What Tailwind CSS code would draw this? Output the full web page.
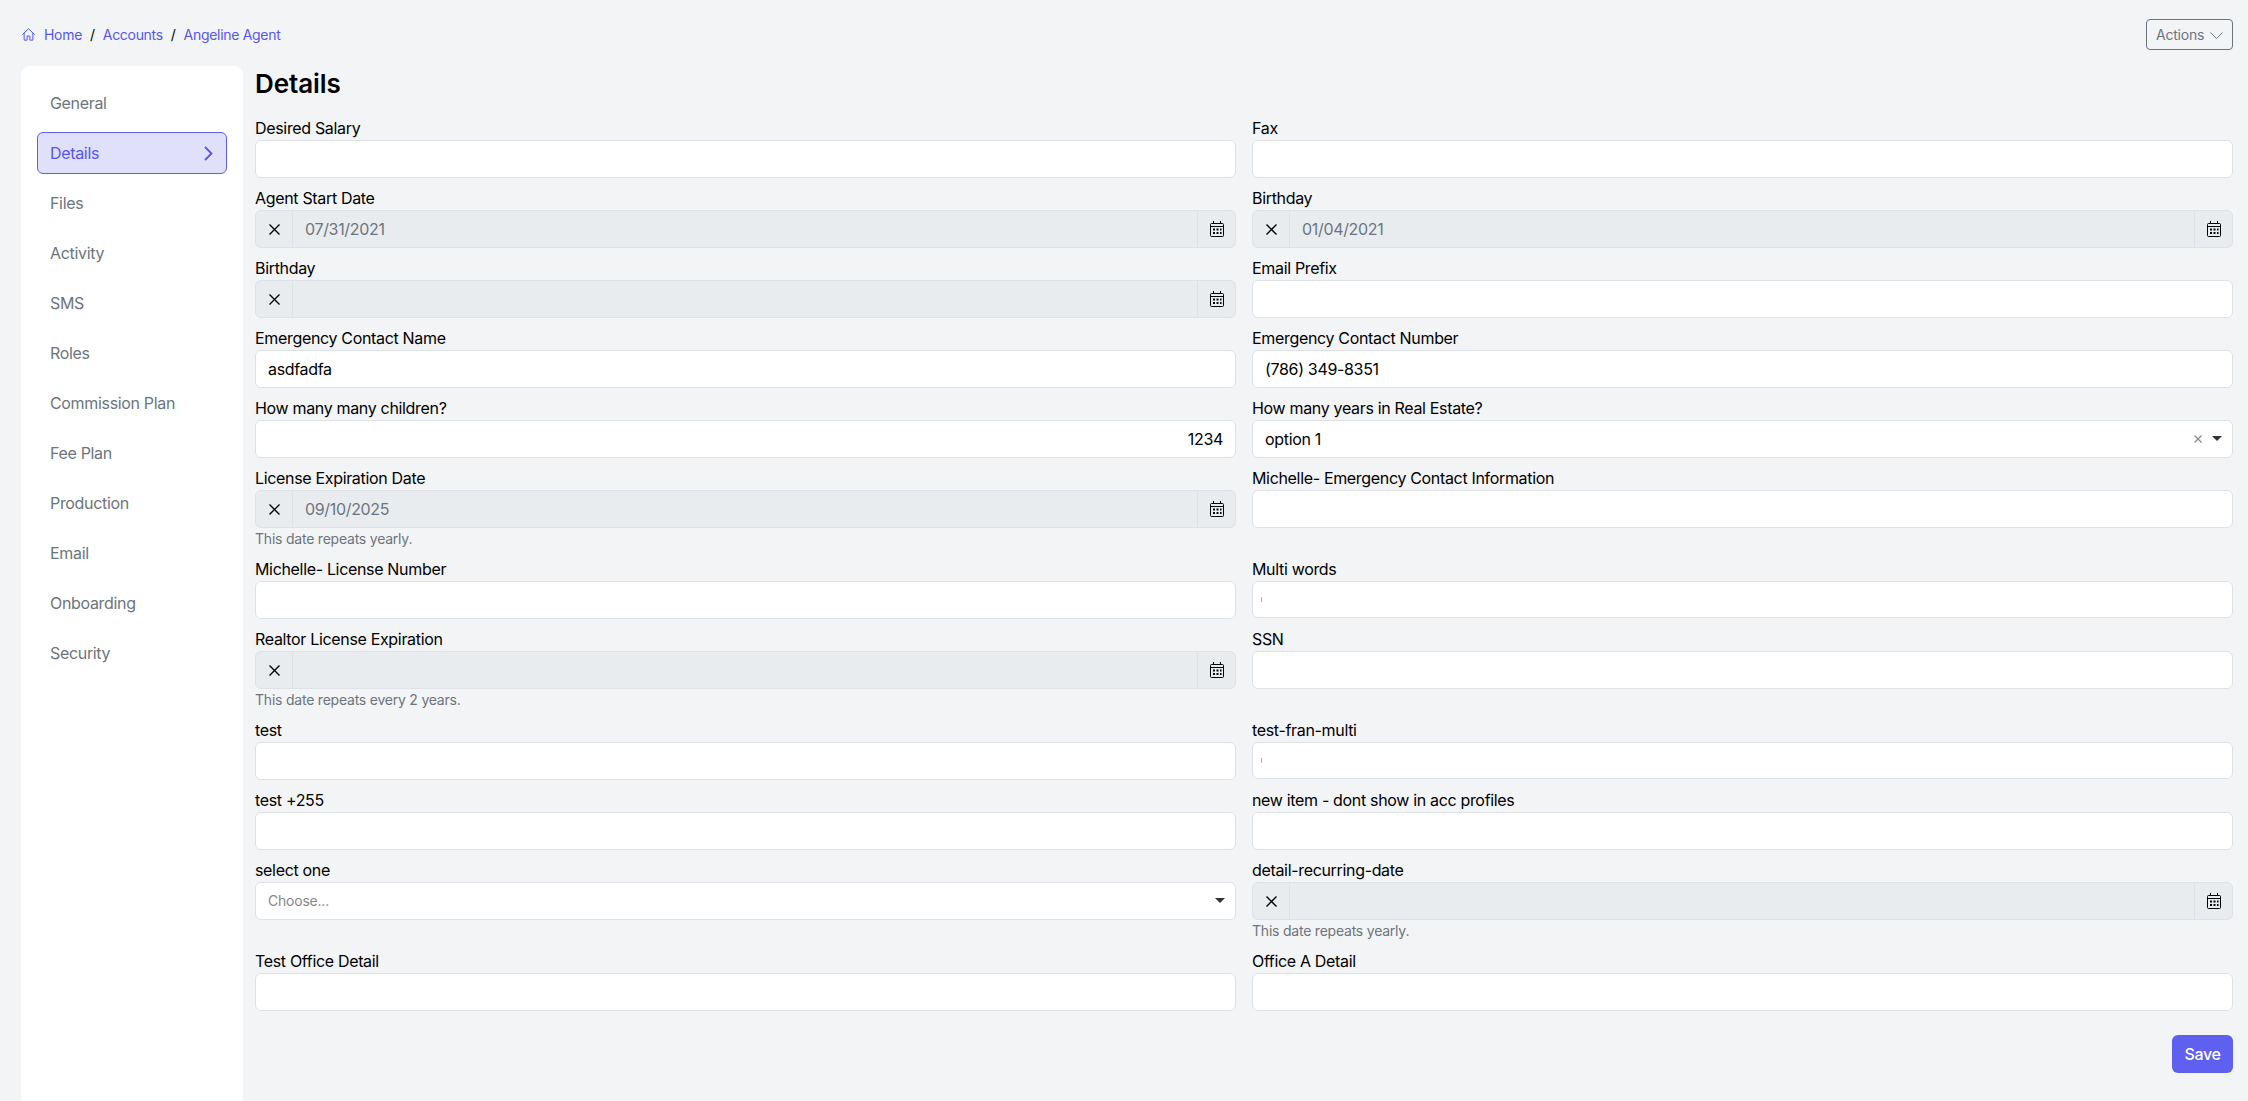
<!DOCTYPE html>
<html lang="en">
<head>
  <meta charset="UTF-8" />
  <title>Angeline Agent - Details</title>
  <script src="https://cdn.jsdelivr.net/npm/@tailwindcss/browser@4"></script>
</head>
<body class="bg-[#f3f4f6] text-black font-['Inter',sans-serif] text-base tracking-[-0.33px] h-screen overflow-hidden">
  <div class="flex flex-col h-[1101px] pl-[21px] pr-[15px]">

    <!-- top bar -->
    <div class="flex items-start justify-between h-[66px] pt-[19px] shrink-0">
      <nav class="flex items-center h-[31px] text-sm tracking-[-0.3px] text-[#5757ee]">
        <svg class="w-[15px] h-[15px] mr-2" viewBox="0 0 24 24" fill="none" stroke="currentColor" stroke-width="1.6" stroke-linecap="round" stroke-linejoin="round"><path d="M2.5 12 12 2.8 21.5 12M5 9.8V21h4.8v-6.5h4.4V21H19V9.8"/></svg>
        <a>Home</a><span class="text-black mx-[8px]">/</span>
        <a>Accounts</a><span class="text-black mx-[8px]">/</span>
        <a>Angeline Agent</a>
      </nav>
      <button class="flex items-center justify-between w-[87px] h-[31px] px-[9px] border border-[#6c757d] rounded text-sm tracking-[-0.22px] text-[#6c757d]">
        Actions
        <svg class="w-[13px] h-[7px] mt-px" viewBox="0 0 13 7" fill="none" stroke="currentColor" stroke-width="1"><path d="M.5.5l6 6 6-6"/></svg>
      </button>
    </div>

    <div class="flex flex-1 min-h-0">
      <!-- sidebar -->
      <aside class="w-[222px] shrink-0 bg-white rounded-t-lg px-4 pt-4 mr-3 text-[#6c757d] flex flex-col gap-2">
        <a class="h-[42px] flex items-center px-[13px]">General</a>
        <a class="h-[42px] flex items-center justify-between pl-3 pr-[13px] border border-[#5f5ff0] rounded-md bg-[#e0e0fb] text-[#5757ee]">
          Details
          <svg class="w-[9px] h-[15px]" viewBox="0 0 9 15" fill="none" stroke="currentColor" stroke-width="1.8"><path d="M1 1l6.5 6.5L1 14"/></svg>
        </a>
        <a class="h-[42px] flex items-center px-[13px]">Files</a>
        <a class="h-[42px] flex items-center px-[13px]">Activity</a>
        <a class="h-[42px] flex items-center px-[13px]">SMS</a>
        <a class="h-[42px] flex items-center px-[13px]">Roles</a>
        <a class="h-[42px] flex items-center px-[13px]">Commission Plan</a>
        <a class="h-[42px] flex items-center px-[13px]">Fee Plan</a>
        <a class="h-[42px] flex items-center px-[13px]">Production</a>
        <a class="h-[42px] flex items-center px-[13px]">Email</a>
        <a class="h-[42px] flex items-center px-[13px]">Onboarding</a>
        <a class="h-[42px] flex items-center px-[13px]">Security</a>
      </aside>

      <!-- form -->
      <main class="flex-1 min-w-0">
        <h1 class="text-[26px] leading-[35px] font-semibold tracking-[-0.1px] mb-[15px]">Details</h1>
        <div class="grid grid-cols-2 gap-x-4">

          <div class="mb-2"><label class="block leading-6">Desired Salary</label><div class="h-[38px] bg-white border border-[#dee2e6] rounded-md"></div></div>
          <div class="mb-2"><label class="block leading-6">Fax</label><div class="h-[38px] bg-white border border-[#dee2e6] rounded-md"></div></div>

          <div class="mb-2"><label class="block leading-6">Agent Start Date</label>
            <div class="h-[38px] flex bg-[#e9ecef] border border-[#dee2e6] rounded-md">
              <span class="w-[37px] flex items-center justify-center border-r border-[#dee2e6]"><svg class="w-[11px] h-[11px]" viewBox="0 0 11 11" stroke="#000" stroke-width="1.4"><path d="M.5.5l10 10M10.5.5l-10 10"/></svg></span>
              <span class="flex-1 flex items-center pl-3 text-[#6c757d]">07/31/2021</span>
              <span class="w-[38px] flex items-center justify-center border-l border-[#dee2e6]"><svg class="w-[14px] h-4" viewBox="0 0 14 16" fill="none" stroke="#000"><rect x=".5" y="2.5" width="13" height="13" rx="1"/><path d="M.5 5.5h13M3.5 0v2.5M10.5 0v2.5"/><path stroke-width="2" stroke-dasharray="2 1.5" d="M3 8.5h8.5M3 12h8.5"/></svg></span>
            </div>
          </div>
          <div class="mb-2"><label class="block leading-6">Birthday</label>
            <div class="h-[38px] flex bg-[#e9ecef] border border-[#dee2e6] rounded-md">
              <span class="w-[37px] flex items-center justify-center border-r border-[#dee2e6]"><svg class="w-[11px] h-[11px]" viewBox="0 0 11 11" stroke="#000" stroke-width="1.4"><path d="M.5.5l10 10M10.5.5l-10 10"/></svg></span>
              <span class="flex-1 flex items-center pl-3 text-[#6c757d]">01/04/2021</span>
              <span class="w-[38px] flex items-center justify-center border-l border-[#dee2e6]"><svg class="w-[14px] h-4" viewBox="0 0 14 16" fill="none" stroke="#000"><rect x=".5" y="2.5" width="13" height="13" rx="1"/><path d="M.5 5.5h13M3.5 0v2.5M10.5 0v2.5"/><path stroke-width="2" stroke-dasharray="2 1.5" d="M3 8.5h8.5M3 12h8.5"/></svg></span>
            </div>
          </div>

          <div class="mb-2"><label class="block leading-6">Birthday</label>
            <div class="h-[38px] flex bg-[#e9ecef] border border-[#dee2e6] rounded-md">
              <span class="w-[37px] flex items-center justify-center border-r border-[#dee2e6]"><svg class="w-[11px] h-[11px]" viewBox="0 0 11 11" stroke="#000" stroke-width="1.4"><path d="M.5.5l10 10M10.5.5l-10 10"/></svg></span>
              <span class="flex-1"></span>
              <span class="w-[38px] flex items-center justify-center border-l border-[#dee2e6]"><svg class="w-[14px] h-4" viewBox="0 0 14 16" fill="none" stroke="#000"><rect x=".5" y="2.5" width="13" height="13" rx="1"/><path d="M.5 5.5h13M3.5 0v2.5M10.5 0v2.5"/><path stroke-width="2" stroke-dasharray="2 1.5" d="M3 8.5h8.5M3 12h8.5"/></svg></span>
            </div>
          </div>
          <div class="mb-2"><label class="block leading-6">Email Prefix</label><div class="h-[38px] bg-white border border-[#dee2e6] rounded-md"></div></div>

          <div class="mb-2"><label class="block leading-6">Emergency Contact Name</label><div class="h-[38px] flex items-center px-3 bg-white border border-[#dee2e6] rounded-md">asdfadfa</div></div>
          <div class="mb-2"><label class="block leading-6">Emergency Contact Number</label><div class="h-[38px] flex items-center px-3 bg-white border border-[#dee2e6] rounded-md">(786) 349-8351</div></div>

          <div class="mb-2"><label class="block leading-6">How many many children?</label><div class="h-[38px] flex items-center justify-end px-3 bg-white border border-[#dee2e6] rounded-md">1234</div></div>
          <div class="mb-2"><label class="block leading-6">How many years in Real Estate?</label>
            <div class="h-[38px] flex items-center pl-3 pr-[10px] bg-white border border-[#dee2e6] rounded-md">
              <span class="flex-1 -mt-px">option 1</span>
              <svg class="w-2 h-2 mr-[10px]" viewBox="0 0 8 8" stroke="#888" stroke-width="1.2"><path d="M.5.5l7 7M7.5.5l-7 7"/></svg>
              <span class="w-0 h-0 -mt-0.5 border-x-[5px] border-x-transparent border-t-[5px] border-t-[#333]"></span>
            </div>
          </div>

          <div class="mb-2"><label class="block leading-6">License Expiration Date</label>
            <div class="h-[38px] flex bg-[#e9ecef] border border-[#dee2e6] rounded-md">
              <span class="w-[37px] flex items-center justify-center border-r border-[#dee2e6]"><svg class="w-[11px] h-[11px]" viewBox="0 0 11 11" stroke="#000" stroke-width="1.4"><path d="M.5.5l10 10M10.5.5l-10 10"/></svg></span>
              <span class="flex-1 flex items-center pl-3 text-[#6c757d]">09/10/2025</span>
              <span class="w-[38px] flex items-center justify-center border-l border-[#dee2e6]"><svg class="w-[14px] h-4" viewBox="0 0 14 16" fill="none" stroke="#000"><rect x=".5" y="2.5" width="13" height="13" rx="1"/><path d="M.5 5.5h13M3.5 0v2.5M10.5 0v2.5"/><path stroke-width="2" stroke-dasharray="2 1.5" d="M3 8.5h8.5M3 12h8.5"/></svg></span>
            </div>
            <p class="text-sm leading-[21px] tracking-[-0.22px] text-[#6c757d]">This date repeats yearly.</p>
          </div>
          <div class="mb-2"><label class="block leading-6">Michelle- Emergency Contact Information</label><div class="h-[38px] bg-white border border-[#dee2e6] rounded-md"></div></div>

          <div class="mb-2"><label class="block leading-6">Michelle- License Number</label><div class="h-[38px] bg-white border border-[#dee2e6] rounded-md"></div></div>
          <div class="mb-2"><label class="block leading-6">Multi words</label><div class="h-[37px] flex items-center pl-2 bg-white border border-[#dee2e6] rounded-md"><span class="w-px h-[5px] bg-[#adb5bd]"></span></div></div>

          <div class="mb-2"><label class="block leading-6">Realtor License Expiration</label>
            <div class="h-[38px] flex bg-[#e9ecef] border border-[#dee2e6] rounded-md">
              <span class="w-[37px] flex items-center justify-center border-r border-[#dee2e6]"><svg class="w-[11px] h-[11px]" viewBox="0 0 11 11" stroke="#000" stroke-width="1.4"><path d="M.5.5l10 10M10.5.5l-10 10"/></svg></span>
              <span class="flex-1"></span>
              <span class="w-[38px] flex items-center justify-center border-l border-[#dee2e6]"><svg class="w-[14px] h-4" viewBox="0 0 14 16" fill="none" stroke="#000"><rect x=".5" y="2.5" width="13" height="13" rx="1"/><path d="M.5 5.5h13M3.5 0v2.5M10.5 0v2.5"/><path stroke-width="2" stroke-dasharray="2 1.5" d="M3 8.5h8.5M3 12h8.5"/></svg></span>
            </div>
            <p class="text-sm leading-[21px] tracking-[-0.22px] text-[#6c757d]">This date repeats every 2 years.</p>
          </div>
          <div class="mb-2"><label class="block leading-6">SSN</label><div class="h-[38px] bg-white border border-[#dee2e6] rounded-md"></div></div>

          <div class="mb-2"><label class="block leading-6">test</label><div class="h-[38px] bg-white border border-[#dee2e6] rounded-md"></div></div>
          <div class="mb-2"><label class="block leading-6">test-fran-multi</label><div class="h-[37px] flex items-center pl-2 bg-white border border-[#dee2e6] rounded-md"><span class="w-px h-[5px] bg-[#adb5bd]"></span></div></div>

          <div class="mb-2"><label class="block leading-6">test +255</label><div class="h-[38px] bg-white border border-[#dee2e6] rounded-md"></div></div>
          <div class="mb-2"><label class="block leading-6">new item - dont show in acc profiles</label><div class="h-[38px] bg-white border border-[#dee2e6] rounded-md"></div></div>

          <div class="mb-2"><label class="block leading-6">select one</label>
            <div class="h-[38px] flex items-center pl-3 pr-[10px] bg-white border border-[#dee2e6] rounded-md text-sm tracking-[-0.22px] text-[#888]">
              <span class="flex-1">Choose...</span>
              <span class="w-0 h-0 -mt-0.5 border-x-[5px] border-x-transparent border-t-[5px] border-t-[#333]"></span>
            </div>
          </div>
          <div class="mb-2"><label class="block leading-6">detail-recurring-date</label>
            <div class="h-[38px] flex bg-[#e9ecef] border border-[#dee2e6] rounded-md">
              <span class="w-[37px] flex items-center justify-center border-r border-[#dee2e6]"><svg class="w-[11px] h-[11px]" viewBox="0 0 11 11" stroke="#000" stroke-width="1.4"><path d="M.5.5l10 10M10.5.5l-10 10"/></svg></span>
              <span class="flex-1"></span>
              <span class="w-[38px] flex items-center justify-center border-l border-[#dee2e6]"><svg class="w-[14px] h-4" viewBox="0 0 14 16" fill="none" stroke="#000"><rect x=".5" y="2.5" width="13" height="13" rx="1"/><path d="M.5 5.5h13M3.5 0v2.5M10.5 0v2.5"/><path stroke-width="2" stroke-dasharray="2 1.5" d="M3 8.5h8.5M3 12h8.5"/></svg></span>
            </div>
            <p class="text-sm leading-[21px] tracking-[-0.22px] text-[#6c757d]">This date repeats yearly.</p>
          </div>

          <div class="mb-2"><label class="block leading-6">Test Office Detail</label><div class="h-[38px] bg-white border border-[#dee2e6] rounded-md"></div></div>
          <div class="mb-2"><label class="block leading-6">Office A Detail</label><div class="h-[38px] bg-white border border-[#dee2e6] rounded-md"></div></div>
        </div>

        <div class="flex justify-end mt-4">
          <button class="w-[61px] h-[38px] bg-[#5f5ff0] text-white font-medium text-base rounded-md">Save</button>
        </div>
      </main>
    </div>
  </div>
</body>
</html>
